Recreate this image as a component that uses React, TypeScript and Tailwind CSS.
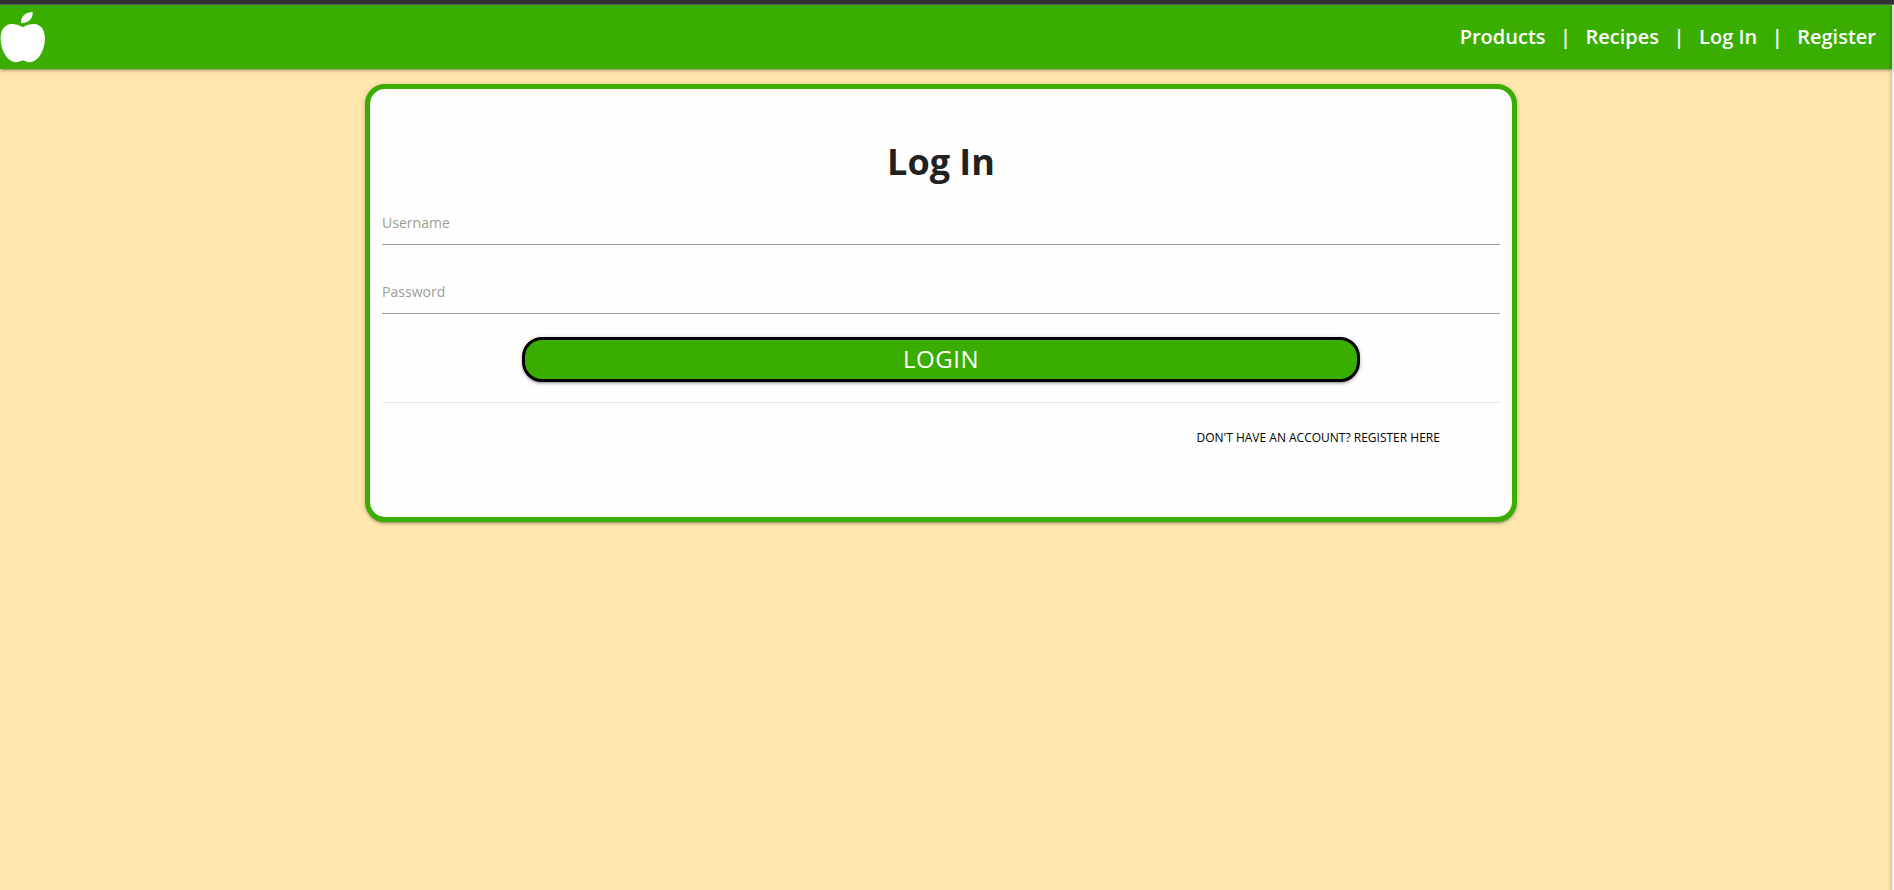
import { Fragment } from "react";

const links = ["Products", "Recipes", "Log In", "Register"];

const fields = [
  { id: "username", label: "Username", type: "text" },
  { id: "password", label: "Password", type: "password" },
];

function AppleLogo() {
  return (
    <svg width="46" height="52" viewBox="0 0 46 52" fill="#fff" aria-hidden="true">
      <path d="M21 12.2C20.6 6.2 24.6 1.2 32.6 1C33.2 7.4 28.8 12.2 21 12.2Z" />
      <path d="M22.8 16.2C27 14 30.2 13 34 13.1C41 13.4 44.9 19 44.9 27.5C44.9 39 38.4 51 29.6 51.2C26.8 51.2 25 49.6 22.8 49.5C20.6 49.6 18.8 51.2 16 51.2C7.2 51 0.6 39 0.6 27.5C0.6 19 4.6 13.4 11.6 13.1C15.4 13 18.6 14 22.8 16.2Z" />
    </svg>
  );
}

function Header() {
  return (
    <header className="relative flex h-16 items-center justify-between bg-[#39ae00] pr-4 shadow-[0_2px_2px_0_rgba(0,0,0,0.14),0_3px_1px_-2px_rgba(0,0,0,0.12),0_1px_5px_0_rgba(0,0,0,0.2)]">
      <a href="#home" aria-label="Home">
        <AppleLogo />
      </a>
      <nav className="flex items-center gap-[14px] text-xl font-semibold text-white">
        {links.map((link, i) => (
          <Fragment key={link}>
            {i > 0 && <span className="w-3 text-center">|</span>}
            <a href="#">{link}</a>
          </Fragment>
        ))}
      </nav>
    </header>
  );
}

function LoginCard() {
  return (
    <main className="w-[61.2%] rounded-[20px] border-5 border-[#39ae00] bg-[#fefefe] px-3 pt-12 pb-[67px] shadow-[0_2px_2px_0_rgba(0,0,0,0.14),0_3px_1px_-2px_rgba(0,0,0,0.12),0_1px_5px_0_rgba(0,0,0,0.2)]">
      <h1 className="text-center text-4xl leading-[50px] font-bold text-[#212121]">Log In</h1>
      <form onSubmit={(e) => e.preventDefault()}>
        {fields.map((field) => (
          <div key={field.id} className="relative pt-[13px] pb-[11px]">
            <label htmlFor={field.id} className="pointer-events-none absolute top-6 left-0 text-sm leading-6 text-[#9a9f96]">
              {field.label}
            </label>
            <input
              id={field.id}
              type={field.type}
              className="block h-[45px] w-full border-b border-[#9e9e9e] bg-transparent text-base outline-none"
            />
          </div>
        ))}
        <button
          type="submit"
          className="mx-auto mt-3 block h-[45px] w-3/4 rounded-[20px] border-3 border-black bg-[#39ae00] pb-0.5 text-2xl leading-9 font-medium tracking-[0.5px] text-white uppercase shadow-[0_2px_2px_0_rgba(0,0,0,0.14),0_3px_1px_-2px_rgba(0,0,0,0.12),0_1px_5px_0_rgba(0,0,0,0.2)]"
        >
          Login
        </button>
      </form>
      <hr className="mt-5 border-[#e8e8e8]" />
      <p className="mt-[23px] pr-15 text-right text-xs leading-6 text-black uppercase">
        <a href="#register">Don't have an account? Register here</a>
      </p>
    </main>
  );
}

export default function App() {
  return (
    <div className="flex min-h-screen flex-col bg-[#ffe7ad] font-['Open_Sans','Noto_Sans',sans-serif]">
      <div className="h-[5px] border-b border-[#666] bg-[#333]" />
      <div className="relative flex grow flex-col border-r-2 border-[#f1f1f1]">
        <Header />
        <div className="flex justify-center pt-[15px] pr-[10px]">
          <LoginCard />
        </div>
        <div className="pointer-events-none absolute inset-y-0 right-0 w-1 bg-linear-to-r from-transparent to-black/15" />
      </div>
    </div>
  );
}
